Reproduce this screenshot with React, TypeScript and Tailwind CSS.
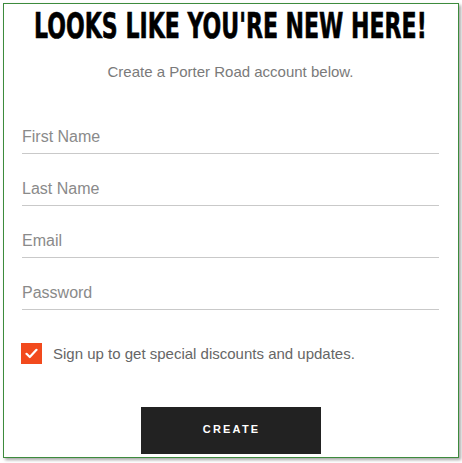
import React from "react";

const fields = ["First Name", "Last Name", "Email", "Password"];

export default function App() {
  return (
    <div className="w-[462px] h-[463px] bg-white pt-[3px] pl-[3px]">
      <div
        className="w-[456px] h-[455px] border border-[#3d8b3d] bg-white shadow-[2px_2px_3px_rgba(0,0,0,0.35)] flex flex-col pl-[18px] pr-[19px]"
        style={{ fontFamily: '"Liberation Sans", Arial, sans-serif' }}
      >
        <div className="pt-[5px] flex justify-center">
          <h1
            className="inline-block text-[35px] leading-[34px] font-bold text-black whitespace-nowrap scale-x-[0.7] origin-center [-webkit-text-stroke:0.6px_black]"
            style={{ fontFamily: '"DejaVu Sans Condensed", "DejaVu Sans", sans-serif' }}
          >
            LOOKS LIKE YOU'RE NEW HERE!
          </h1>
        </div>
        <p className="mt-[19px] text-center text-[15px] leading-[20px] text-[#7a7a7a]">
          Create a Porter Road account below.
        </p>
        <div className="mt-[20px] flex flex-col">
          {fields.map((f) => (
            <div
              key={f}
              className="h-[52px] border-b border-[#c9c9c9] flex items-end pb-[6px]"
            >
              <span className="text-[16px] leading-[20px] text-[#8a8a8a]">{f}</span>
            </div>
          ))}
        </div>
        <div className="mt-[33px] flex items-center gap-[11px] -ml-[1px]">
          <div className="w-[21px] h-[21px] bg-[#f24a1d] flex items-center justify-center">
            <svg width="13" height="11" viewBox="0 0 13 11" fill="none">
              <path
                d="M1.5 5.8 L4.8 9 L11.5 1.8"
                stroke="white"
                strokeWidth="2.2"
                strokeLinecap="round"
                strokeLinejoin="round"
              />
            </svg>
          </div>
          <span className="text-[15px] leading-[20px] text-[#666666]">
            Sign up to get special discounts and updates.
          </span>
        </div>
        <div className="mt-[43px] flex justify-center">
          <button className="w-[180px] h-[47px] bg-[#222222] text-white text-[11px] leading-[11px] font-bold tracking-[0.2em] pl-[0.2em] pb-[3px]">
            CREATE
          </button>
        </div>
      </div>
    </div>
  );
}
